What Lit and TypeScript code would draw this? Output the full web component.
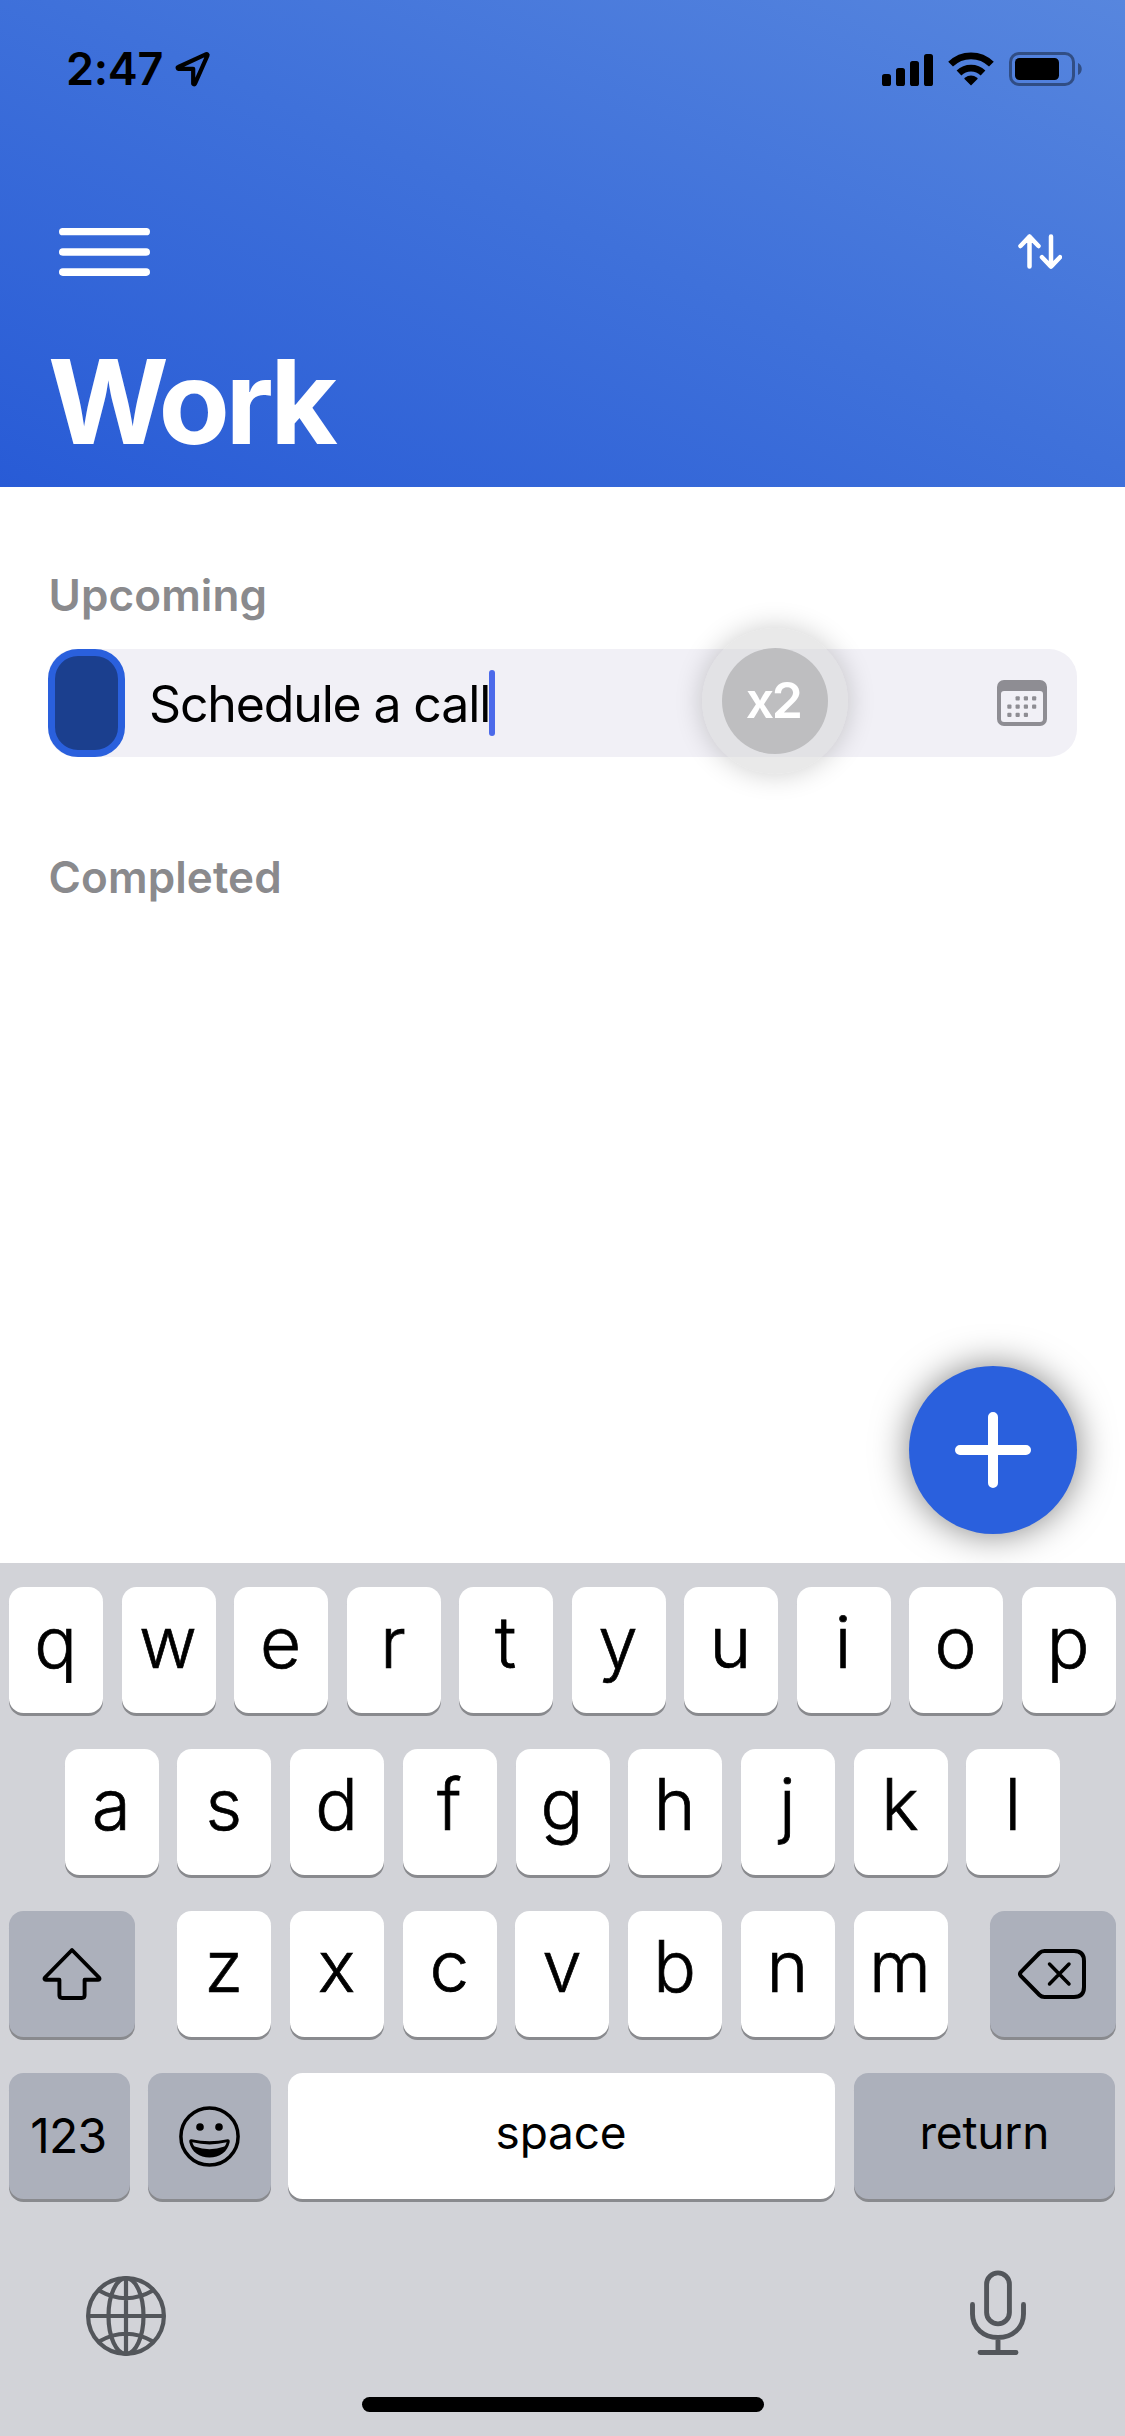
import { LitElement, html, css, svg } from "lit";
import { customElement, property } from "lit/decorators.js";

const locationIcon = html`<svg class="location" width="37" height="37" viewBox="0 0 37 37">
  <path d="M32.3 3.2 4.4 16a.9.9 0 0 0 .4 1.8h14.4v14.4a.9.9 0 0 0 1.8.4L33.500 4.400a.9.9 0 0 0-1.200-1.200Z" fill="none" stroke="#000" stroke-width="4.200" stroke-linejoin="round"/>
</svg>`;

const signalIcon = html`<svg width="51" height="33" viewBox="0 0 51 33">
  <rect x="0" y="21" width="9" height="12" rx="2.600"/>
  <rect x="14" y="15" width="9" height="18" rx="2.600"/>
  <rect x="28" y="8" width="9" height="25" rx="2.600"/>
  <rect x="42" y="1" width="9" height="32" rx="2.600"/>
</svg>`;

const wifiIcon = html`<svg width="46" height="34" viewBox="0 0 46 34">
  <g fill="none" stroke="#000" stroke-width="6.800">
    <path d="M2.600 12.200a29 29 0 0 1 40.800 0"/>
    <path d="M11 21a17.200 17.200 0 0 1 24 0"/>
  </g>
  <path d="M23 33.500 16.500 27q-.5-.8.3-1.300a10.500 10.500 0 0 1 12.400 0q.8.5.3 1.300Z"/>
</svg>`;

const batteryIcon = html`<svg width="73" height="34" viewBox="0 0 73 34">
  <rect x="1.500" y="1.500" width="63" height="31" rx="8.500" fill="none" stroke="#000" stroke-opacity=".4" stroke-width="3"/>
  <rect x="6" y="6" width="44" height="22" rx="4.500"/>
  <path d="M69 11c5 2 5 10 0 12Z" fill-opacity=".4"/>
</svg>`;

const menuIcon = html`<svg width="91" height="48" viewBox="0 0 91 48" fill="#fff">
  <rect y="0" width="91" height="7.300" rx="3.650"/>
  <rect y="20.200" width="91" height="7.600" rx="3.800"/>
  <rect y="40.300" width="91" height="7.600" rx="3.800"/>
</svg>`;

const sortIcon = html`<svg width="44" height="36" viewBox="0 0 44 36" fill="none" stroke="#fff" stroke-width="4.500" stroke-linecap="round" stroke-linejoin="round">
  <path d="M11.500 32.600V2.600M2.500 12l9-9.400 9 9.400M33 2.600v30M24 23.200l9 9.400 9-9.400"/>
</svg>`;

const calendarDots = [
  [1, 0], [2, 0], [3, 0],
  [0, 1], [1, 1], [2, 1], [3, 1],
  [0, 2], [1, 2], [2, 2],
];

const calendarIcon = html`<svg width="50" height="46" viewBox="0 0 50 46">
  <path fill="#8e8d93" fill-rule="evenodd" d="M7 0h36a7 7 0 0 1 7 7v32a7 7 0 0 1-7 7H7a7 7 0 0 1-7-7V7a7 7 0 0 1 7-7ZM7 11a3 3 0 0 0-3 3v25a3 3 0 0 0 3 3h36a3 3 0 0 0 3-3V14a3 3 0 0 0-3-3Z"/>
  ${calendarDots.map(([c, r]) => svg`<rect x=${10.3 + c * 8.25} y=${16.3 + r * 8.2} width="4.200" height="4.200" rx="1" fill="#8e8d93"/>`)}
</svg>`;

const plusIcon = html`<svg width="76" height="76" viewBox="0 0 76 76" stroke="#fff" stroke-width="10" stroke-linecap="round">
  <path d="M38 5v66M5 38h66"/>
</svg>`;

const shiftIcon = html`<svg width="60" height="54" viewBox="0 0 60 54" fill="none" stroke="#000" stroke-width="3.900" stroke-linejoin="round">
  <path d="M30 3 3 30.500c-1 1.200-.5 2.200.8 2.200h13.600v15.600q0 2.700 2.700 2.700h19.800q2.700 0 2.700-2.700V32.700h13.600c1.300 0 1.800-1 .8-2.200Z"/>
</svg>`;

const deleteIcon = html`<svg width="68" height="50" viewBox="0 0 68 50" fill="none" stroke="#000" stroke-linecap="round" stroke-linejoin="round">
  <path stroke-width="4" d="M3 22.800 21.500 4Q23.500 2 26.500 2H56q10 0 10 10v26q0 10-10 10H26.500q-3 0-5-2L3 27.200q-2-2.200 0-4.400Z"/>
  <path stroke-width="3.500" d="m31.500 15 19.500 20M51 15l-19.500 20"/>
</svg>`;

const emojiIcon = html`<svg width="61" height="61" viewBox="0 0 61 61">
  <circle cx="30.500" cy="30.500" r="28.600" fill="none" stroke="#000" stroke-width="3.500"/>
  <circle cx="21" cy="21" r="3.800"/>
  <circle cx="40" cy="21" r="3.800"/>
  <path fill-rule="evenodd" d="M12.300 33.300Q30.500 37.300 48.700 33.300Q51.300 33.300 50.600 36.500C48.500 46 40.500 51.500 30.500 51.500S12.500 46 10.400 36.500Q9.700 33.300 12.300 33.300ZM13.300 36.300Q14 38.800 15.600 40.600Q30.500 45.800 45.400 40.600Q47 38.800 47.700 36.300Q30.500 40.500 13.300 36.300Z"/>
</svg>`;

const globeIcon = html`<svg width="80" height="80" viewBox="0 0 80 80" fill="none" stroke="#53565b" stroke-width="4.200">
  <circle cx="40" cy="40" r="37.900"/>
  <ellipse cx="40" cy="40" rx="17.500" ry="37.900"/>
  <path d="M40 2v76M2 40h76M13 14.500q27 15.500 54 0M13 65.500q27-15.500 54 0"/>
</svg>`;

const micIcon = html`<svg width="56" height="86" viewBox="0 0 56 86" fill="none" stroke="#53565b" stroke-width="4.900" stroke-linecap="round">
  <rect x="16.600" y="2.900" width="22.800" height="51" rx="11.400"/>
  <path d="M2.500 34.500v9.500c0 14 11 23.500 25.500 23.500S53.500 58 53.500 44v-9.500M28 67.500V82.500M10 82.500h36"/>
</svg>`;

@customElement("key-cap")
class KeyCap extends LitElement {
  @property() label = "";

  static styles = css`
    :host {
      display: flex;
      flex: 0 0 94px;
      height: 126px;
      box-sizing: border-box;
      justify-content: center;
      padding-right: 1px;
      border-radius: 14.5px;
      background: #fff;
      box-shadow: 0 3px 0 #898a8e;
      font: 300 71px/111px Inter, "Liberation Sans", sans-serif;
      -webkit-text-stroke: 0.7px #000;
      color: #000;
    }
  `;

  render() {
    return html`${this.label}<slot></slot>`;
  }
}

@customElement("ios-keyboard")
class IosKeyboard extends LitElement {
  static styles = css`
    :host {
      display: flex;
      flex-direction: column;
      box-sizing: border-box;
      height: 873px;
      padding: 24px 9px 0;
      background: #d2d3d8;
    }
    svg {
      display: block;
    }
    .row {
      display: flex;
      gap: 18.7px;
      margin-bottom: 36px;
      justify-content: center;
    }
    .top {
      gap: 18.5px;
      justify-content: flex-start;
    }
    .grey {
      background: #acb0bb;
      align-items: center;
    }
    .shift {
      flex-basis: 126px;
      margin-right: 23.4px;
      padding-right: 0;
    }
    .delete {
      flex-basis: 126px;
      margin-left: 23.5px;
      padding-right: 2px;
    }
    .bottom {
      gap: 0;
      justify-content: flex-start;
      margin-bottom: 0;
    }
    .numbers,
    .space,
    .return {
      font-weight: 400;
      -webkit-text-stroke: 0;
    }
    .numbers {
      flex-basis: 120.5px;
      padding-right: 2px;
      font-size: 48px;
      line-height: 126px;
      letter-spacing: -0.8px;
      margin-right: 18.5px;
    }
    .emoji {
      flex-basis: 123px;
      margin-right: 16.5px;
      padding-right: 1px;
    }
    .space,
    .return {
      padding-right: 0;
      font-size: 46px;
      line-height: 118px;
      letter-spacing: -0.2px;
    }
    .space {
      flex-basis: 547px;
      margin-right: 19.3px;
    }
    .return {
      flex-basis: 261px;
      align-items: flex-start;
    }
    .tools {
      display: flex;
      justify-content: space-between;
      padding: 71px 90px 0 77px;
    }
    .globe {
      padding-top: 6px;
    }
    .home {
      width: 402px;
      height: 15px;
      border-radius: 8px;
      background: #000;
      margin: 41px auto 0;
    }
  `;

  private keys(letters: string) {
    return [...letters].map((l) => html`<key-cap label=${l}></key-cap>`);
  }

  render() {
    return html`
      <div class="row top">${this.keys("qwertyuiop")}</div>
      <div class="row">${this.keys("asdfghjkl")}</div>
      <div class="row">
        <key-cap class="grey shift">${shiftIcon}</key-cap>
        ${this.keys("zxcvbnm")}
        <key-cap class="grey delete">${deleteIcon}</key-cap>
      </div>
      <div class="row bottom">
        <key-cap class="grey numbers" label="123"></key-cap>
        <key-cap class="grey emoji">${emojiIcon}</key-cap>
        <key-cap class="space" label="space"></key-cap>
        <key-cap class="grey return" label="return"></key-cap>
      </div>
      <div class="tools">
        <div class="globe">${globeIcon}</div>
        ${micIcon}
      </div>
      <div class="home"></div>
    `;
  }
}

@customElement("app-root")
class AppRoot extends LitElement {
  static styles = css`
    :host {
      display: flex;
      flex-direction: column;
      width: 1125px;
      height: 2436px;
      overflow: hidden;
      background: #fff;
      font-family: Inter, "Liberation Sans", sans-serif;
      color: #000;
    }
    svg {
      display: block;
    }
    header {
      height: 487px;
      box-sizing: border-box;
      padding-top: 42px;
      background: linear-gradient(to top right, #285bd6, #3f71da 52%, #5786de);
    }
    .status {
      display: flex;
      align-items: center;
      height: 54px;
      padding: 0 43px 0 66px;
    }
    .time {
      font-size: 45px;
      font-weight: 600;
      line-height: 54px;
      letter-spacing: -0.3px;
    }
    .location {
      margin: 0 auto 0 10.500px;
    }
    .indicators {
      display: flex;
      align-items: center;
      gap: 15px;
    }
    .toolbar {
      display: flex;
      align-items: center;
      justify-content: space-between;
      height: 48px;
      margin-top: 132px;
      padding: 0 63px 0 59px;
    }
    h1 {
      margin: 66px 0 0;
      padding-left: 48px;
      color: #fff;
      font-size: 116.500px;
      font-weight: 700;
      line-height: 120px;
      letter-spacing: -4.500px;
    }
    main {
      flex: 1;
      padding: 82px 48px 0;
      position: relative;
    }
    h2 {
      margin: 0 0 0 0.5px;
      color: #8a8a8d;
      font-size: 44px;
      font-weight: 600;
      line-height: 52px;
      letter-spacing: 0.1px;
    }
    .task {
      display: flex;
      align-items: center;
      height: 108px;
      margin: 28px 0 94px;
      border-radius: 28px;
      background: #f1f0f6;
      position: relative;
    }
    .check {
      width: 77px;
      height: 108px;
      box-sizing: border-box;
      border: 7.500px solid #2a60dd;
      border-radius: 30px;
      background: #1b3f8e;
    }
    .text {
      margin-left: 24px;
      padding-top: 2px;
      font-size: 50px;
      line-height: 60px;
      letter-spacing: -1.150px;
    }
    .caret {
      width: 6px;
      height: 66px;
      margin-left: -1px;
      border-radius: 3px;
      background: #4c6aea;
    }
    .calendar {
      margin: 0 30px 0 auto;
    }
    .touch {
      position: absolute;
      left: 654px;
      top: -21px;
      width: 146px;
      height: 146px;
      box-sizing: border-box;
      padding: 20px;
      border-radius: 50%;
      background: rgba(211, 211, 211, 0.5);
      box-shadow: 0 0 28px rgba(0, 0, 0, 0.2);
    }
    .count {
      height: 106px;
      box-sizing: border-box;
      padding-right: 4px;
      border-radius: 50%;
      background: #bebec0;
      color: #fff;
      font-size: 50px;
      font-weight: 600;
      line-height: 104px;
      text-align: center;
      letter-spacing: -2.500px;
    }
    .fab {
      position: absolute;
      right: 48px;
      bottom: 29px;
      width: 168px;
      height: 168px;
      display: grid;
      place-items: center;
      border-radius: 50%;
      background: #2a60dd;
      box-shadow: 0 0 36px rgba(0, 0, 0, 0.5);
    }
    ios-keyboard {
      position: relative;
    }
  `;

  render() {
    return html`
      <header>
        <div class="status">
          <span class="time">2:47</span>
          ${locationIcon}
          <div class="indicators">${signalIcon}${wifiIcon}${batteryIcon}</div>
        </div>
        <div class="toolbar">${menuIcon}${sortIcon}</div>
        <h1>Work</h1>
      </header>
      <main>
        <h2>Upcoming</h2>
        <div class="task">
          <div class="check"></div>
          <span class="text">Schedule a call</span>
          <div class="caret"></div>
          <div class="calendar">${calendarIcon}</div>
          <div class="touch"><div class="count">x2</div></div>
        </div>
        <h2>Completed</h2>
        <div class="fab">${plusIcon}</div>
      </main>
      <ios-keyboard></ios-keyboard>
    `;
  }
}
